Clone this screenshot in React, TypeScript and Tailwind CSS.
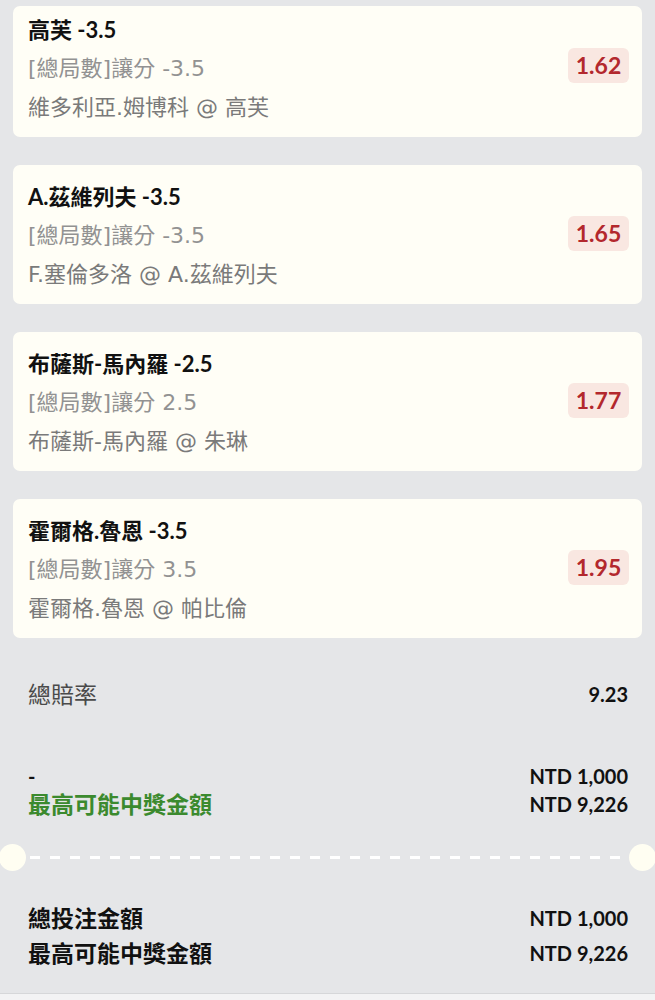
const latin = 'font-["Lato","Noto_Sans_CJK_TC",sans-serif]';
const noto = 'font-["Noto_Sans","Noto_Sans_CJK_TC",sans-serif]';
const gray = 'font-["DejaVu_Sans","Noto_Sans_CJK_TC",sans-serif]';

type Bet = { pick: string; market: string; match: string; odds: string };

const bets: Bet[] = [
  { pick: '高芙 -3.5', market: '[總局數]讓分 -3.5', match: '維多利亞.姆博科 @ 高芙', odds: '1.62' },
  { pick: 'A.茲維列夫 -3.5', market: '[總局數]讓分 -3.5', match: 'F.塞倫多洛 @ A.茲維列夫', odds: '1.65' },
  { pick: '布薩斯-馬內羅 -2.5', market: '[總局數]讓分 2.5', match: '布薩斯-馬內羅 @ 朱琳', odds: '1.77' },
  { pick: '霍爾格.魯恩 -3.5', market: '[總局數]讓分 3.5', match: '霍爾格.魯恩 @ 帕比倫', odds: '1.95' },
];

function BetCard({ bet, first }: { bet: Bet; first?: boolean }) {
  return (
    <div
      className={`flex items-center justify-between rounded-[7px] bg-[#fffef6] pl-[15px] pr-[13px] pb-[10px] ${first ? 'pt-[4px]' : 'pt-[12px]'}`}
    >
      <div className="flex flex-col">
        <div className={`${latin} text-[22px] leading-[39px] font-bold text-[#111]`}>{bet.pick}</div>
        <div className={`${gray} text-[22px] leading-[39px] text-[#929292]`}>{bet.market}</div>
        <div className={`${gray} text-[22px] leading-[39px] text-[#7a7a7a]`}>{bet.match}</div>
      </div>
      <div
        className={`${latin} ${first ? '-mt-[7px]' : '-mt-[4px]'} flex h-[35px] w-[61px] items-center justify-center rounded-[6px] bg-[#f9e7e1] text-[23px] font-bold text-[#b3282d]`}
      >
        {bet.odds}
      </div>
    </div>
  );
}

export default function App() {
  return (
    <div className="flex min-h-[1000px] w-full flex-col bg-[#e5e6e8]">
      <div className="flex flex-col gap-[28px] px-[13px] pt-[6px]">
        {bets.map((b, i) => (
          <BetCard key={b.pick} bet={b} first={i === 0} />
        ))}
      </div>

      <div className="mt-[42px] flex items-center justify-between pl-[28px] pr-[27px] leading-[28px]">
        <span className={`${noto} text-[23px] text-[#4a4a4a]`}>總賠率</span>
        <span className={`${latin} text-[20px] font-bold text-[#111]`}>9.23</span>
      </div>

      <div className="mt-[54px] flex flex-col pl-[28px] pr-[27px] leading-[28px]">
        <div className="flex items-center justify-between">
          <span className={`${latin} text-[20px] font-bold text-[#111]`}>-</span>
          <span className={`${latin} text-[20px] font-bold text-[#111]`}>NTD 1,000</span>
        </div>
        <div className="flex items-center justify-between">
          <span className={`${noto} text-[23px] font-bold text-[#3b8a2e]`}>最高可能中獎金額</span>
          <span className={`${latin} text-[20px] font-bold text-[#111]`}>NTD 9,226</span>
        </div>
      </div>

      <div className="mt-[26px] flex h-[27px] items-center">
        <div className="-ml-px h-[27px] w-[27px] shrink-0 rounded-full bg-[#fffef2]" />
        <div className="mx-[4px] h-[3px] flex-1 bg-[repeating-linear-gradient(90deg,#ffffff_0_10px,transparent_10px_20px)]" />
        <div className="-mr-px h-[27px] w-[27px] shrink-0 rounded-full bg-[#fffef2]" />
      </div>

      <div className="mt-[30px] flex flex-col pl-[28px] pr-[27px] pb-[22px] leading-[35px]">
        <div className="flex items-center justify-between">
          <span className={`${noto} text-[23px] font-bold text-[#111]`}>總投注金額</span>
          <span className={`${latin} text-[20px] font-bold text-[#111]`}>NTD 1,000</span>
        </div>
        <div className="flex items-center justify-between">
          <span className={`${noto} text-[23px] font-bold text-[#111]`}>最高可能中獎金額</span>
          <span className={`${latin} text-[20px] font-bold text-[#111]`}>NTD 9,226</span>
        </div>
      </div>

      <div className="flex-1 border-t border-[#d6d7d9] bg-[#f3f3f4]" />
    </div>
  );
}
